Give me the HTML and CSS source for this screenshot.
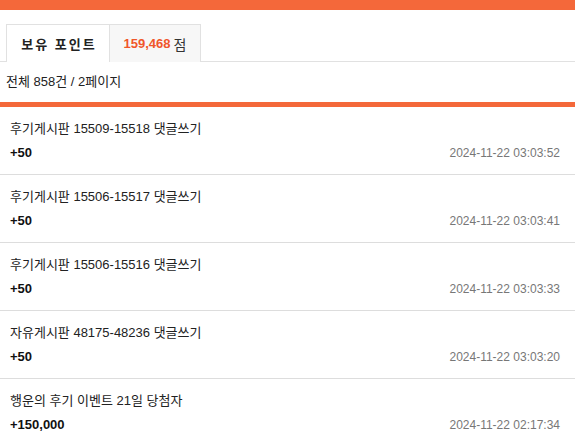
FILE: index.html
```html
<!DOCTYPE html>
<html lang="ko">
<head>
    <meta charset="UTF-8">
    <meta name="viewport" content="width=device-width, initial-scale=1.0">
    <title>포인트 내역</title>
    <link rel="stylesheet" href="styles.css">
</head>
<body>
    <div class="top-bar"></div>

    <div class="tabs">
        <div class="tab active">보유 포인트</div>
        <div class="tab"><span class="point-num">159,468</span> 점</div>
    </div>

    <div class="summary">전체 858건 / 2페이지</div>

    <ul class="point-list">
        <li class="point-item">
            <div class="point-title">후기게시판 15509-15518 댓글쓰기</div>
            <div class="point-row">
                <span class="point-amount">+50</span>
                <span class="point-date">2024-11-22 03:03:52</span>
            </div>
        </li>
        <li class="point-item">
            <div class="point-title">후기게시판 15506-15517 댓글쓰기</div>
            <div class="point-row">
                <span class="point-amount">+50</span>
                <span class="point-date">2024-11-22 03:03:41</span>
            </div>
        </li>
        <li class="point-item">
            <div class="point-title">후기게시판 15506-15516 댓글쓰기</div>
            <div class="point-row">
                <span class="point-amount">+50</span>
                <span class="point-date">2024-11-22 03:03:33</span>
            </div>
        </li>
        <li class="point-item">
            <div class="point-title">자유게시판 48175-48236 댓글쓰기</div>
            <div class="point-row">
                <span class="point-amount">+50</span>
                <span class="point-date">2024-11-22 03:03:20</span>
            </div>
        </li>
        <li class="point-item">
            <div class="point-title">행운의 후기 이벤트 21일 당첨자</div>
            <div class="point-row">
                <span class="point-amount">+150,000</span>
                <span class="point-date">2024-11-22 02:17:34</span>
            </div>
        </li>
    </ul>
</body>
</html>
```

FILE: styles.css
```css
body {
    margin: 0;
    padding: 0;
    font-family: "Liberation Sans", "Noto Sans CJK KR", sans-serif;
    font-size: 13px;
    color: #222;
    background-color: #fff;
}

.top-bar {
    height: 10px;
    background-color: #f4683a;
}

/* tabs */
.tabs {
    display: flex;
    margin-top: 14px;
    padding-left: 6px;
    border-bottom: 1px solid #e1e1e1;
}

.tab {
    box-sizing: border-box;
    display: flex;
    align-items: center;
    justify-content: center;
    border: 1px solid #e1e1e1;
    border-bottom: none;
    background-color: #f7f7f7;
    margin-bottom: -1px;
    height: 38px;
    width: 92px;
    font-size: 14px;
    color: #333;
}

.tab.active {
    width: 103px;
    background-color: #fff;
    border-right: none;
    font-weight: bold;
    font-size: 13px;
    letter-spacing: 2px;
    padding-left: 2px;
    color: #222;
}

.point-num {
    color: #f0562a;
    font-weight: bold;
    font-size: 13px;
    margin-right: 3px;
}

.summary {
    height: 40px;
    line-height: 40px;
    padding-left: 6px;
    border-bottom: 5px solid #f4683a;
}

/* list */
.point-list {
    list-style: none;
    margin: 0;
    padding: 0;
}

.point-item {
    padding: 14px 15px 13px 10px;
    border-bottom: 1px solid #dddddd;
}

.point-title {
    line-height: 16px;
    margin-bottom: 8px;
}

.point-row {
    display: flex;
    justify-content: space-between;
    line-height: 16px;
}

.point-amount {
    font-weight: bold;
    color: #111;
}

.point-date {
    font-size: 12px;
    color: #777;
}
```
